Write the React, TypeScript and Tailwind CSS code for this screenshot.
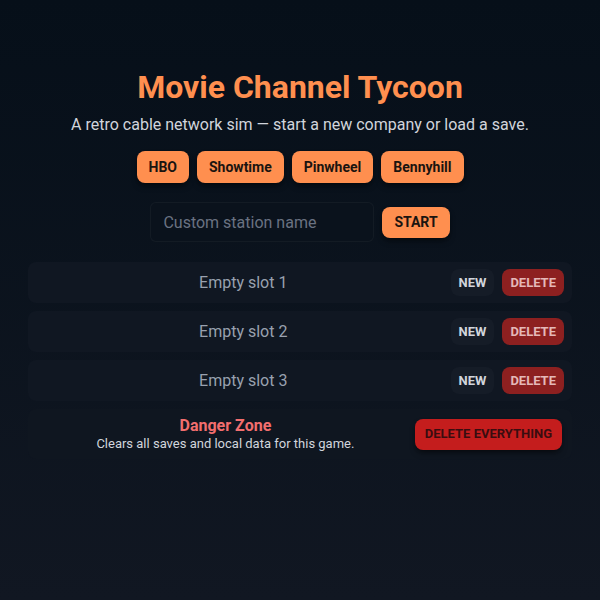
const presets = ['HBO', 'Showtime', 'Pinwheel', 'Bennyhill']
const slots = [1, 2, 3]

export default function App() {
  return (
    <div
      className="min-h-[600px] w-full bg-gradient-to-b from-[#060f19] to-[#111722] text-gray-200"
      style={{ fontFamily: 'Roboto, "Noto Sans", sans-serif' }}
    >
      <div className="mx-auto flex w-[544px] flex-col items-center pt-[66px]">
        <h1 className="text-[32px] font-bold leading-[42px] text-[#ff8f4f]">Movie Channel Tycoon</h1>
        <p className="mt-[5px] text-base text-gray-300">
          A retro cable network sim — start a new company or load a save.
        </p>

        <div className="mt-[14px] flex gap-2">
          {presets.map((p) => (
            <button
              key={p}
              className="h-8 rounded-lg bg-[#ff8f4f] px-3 text-sm font-bold text-[#1a1410] shadow-md shadow-black/40"
            >
              {p}
            </button>
          ))}
        </div>

        <div className="mt-[19px] flex items-center gap-2">
          <input
            placeholder="Custom station name"
            className="h-10 w-[224px] rounded-md border border-white/[0.04] bg-[#0a121c] px-3 text-base text-gray-200 placeholder:text-gray-500 outline-none"
          />
          <button className="h-[31px] rounded-lg bg-[#ff8f4f] px-3 text-sm font-bold text-[#1a1410] shadow-md shadow-black/40">
            START
          </button>
        </div>

        <div className="mt-[20px] flex w-full flex-col gap-2">
          {slots.map((n) => (
            <div
              key={n}
              className="flex h-[41px] items-center rounded-lg bg-[#101722] px-2"
            >
              <span className="flex-1 text-center text-base text-gray-400">Empty slot {n}</span>
              <div className="flex gap-2">
                <button className="h-[27px] rounded-lg bg-[#151c27] px-2 text-[13px] font-bold text-gray-300">
                  NEW
                </button>
                <button className="h-[27px] rounded-lg bg-[#8d2020] px-2 text-[13px] font-bold text-[#e4b8b8]">
                  DELETE
                </button>
              </div>
            </div>
          ))}

          <div className="flex h-[50px] items-center rounded-lg bg-[#0f1620] pl-2 pr-[10px]">
            <div className="flex flex-1 flex-col items-center">
              <span className="text-base font-bold leading-[18px] text-[#f26e6e]">Danger Zone</span>
              <span className="text-[13px] leading-[17px] text-gray-300">
                Clears all saves and local data for this game.
              </span>
            </div>
            <button className="h-[31px] rounded-lg bg-[#c41d1d] px-[10px] text-[13px] font-bold text-[#3a0d10] shadow-md shadow-black/40">
              DELETE EVERYTHING
            </button>
          </div>
        </div>
      </div>
    </div>
  )
}
